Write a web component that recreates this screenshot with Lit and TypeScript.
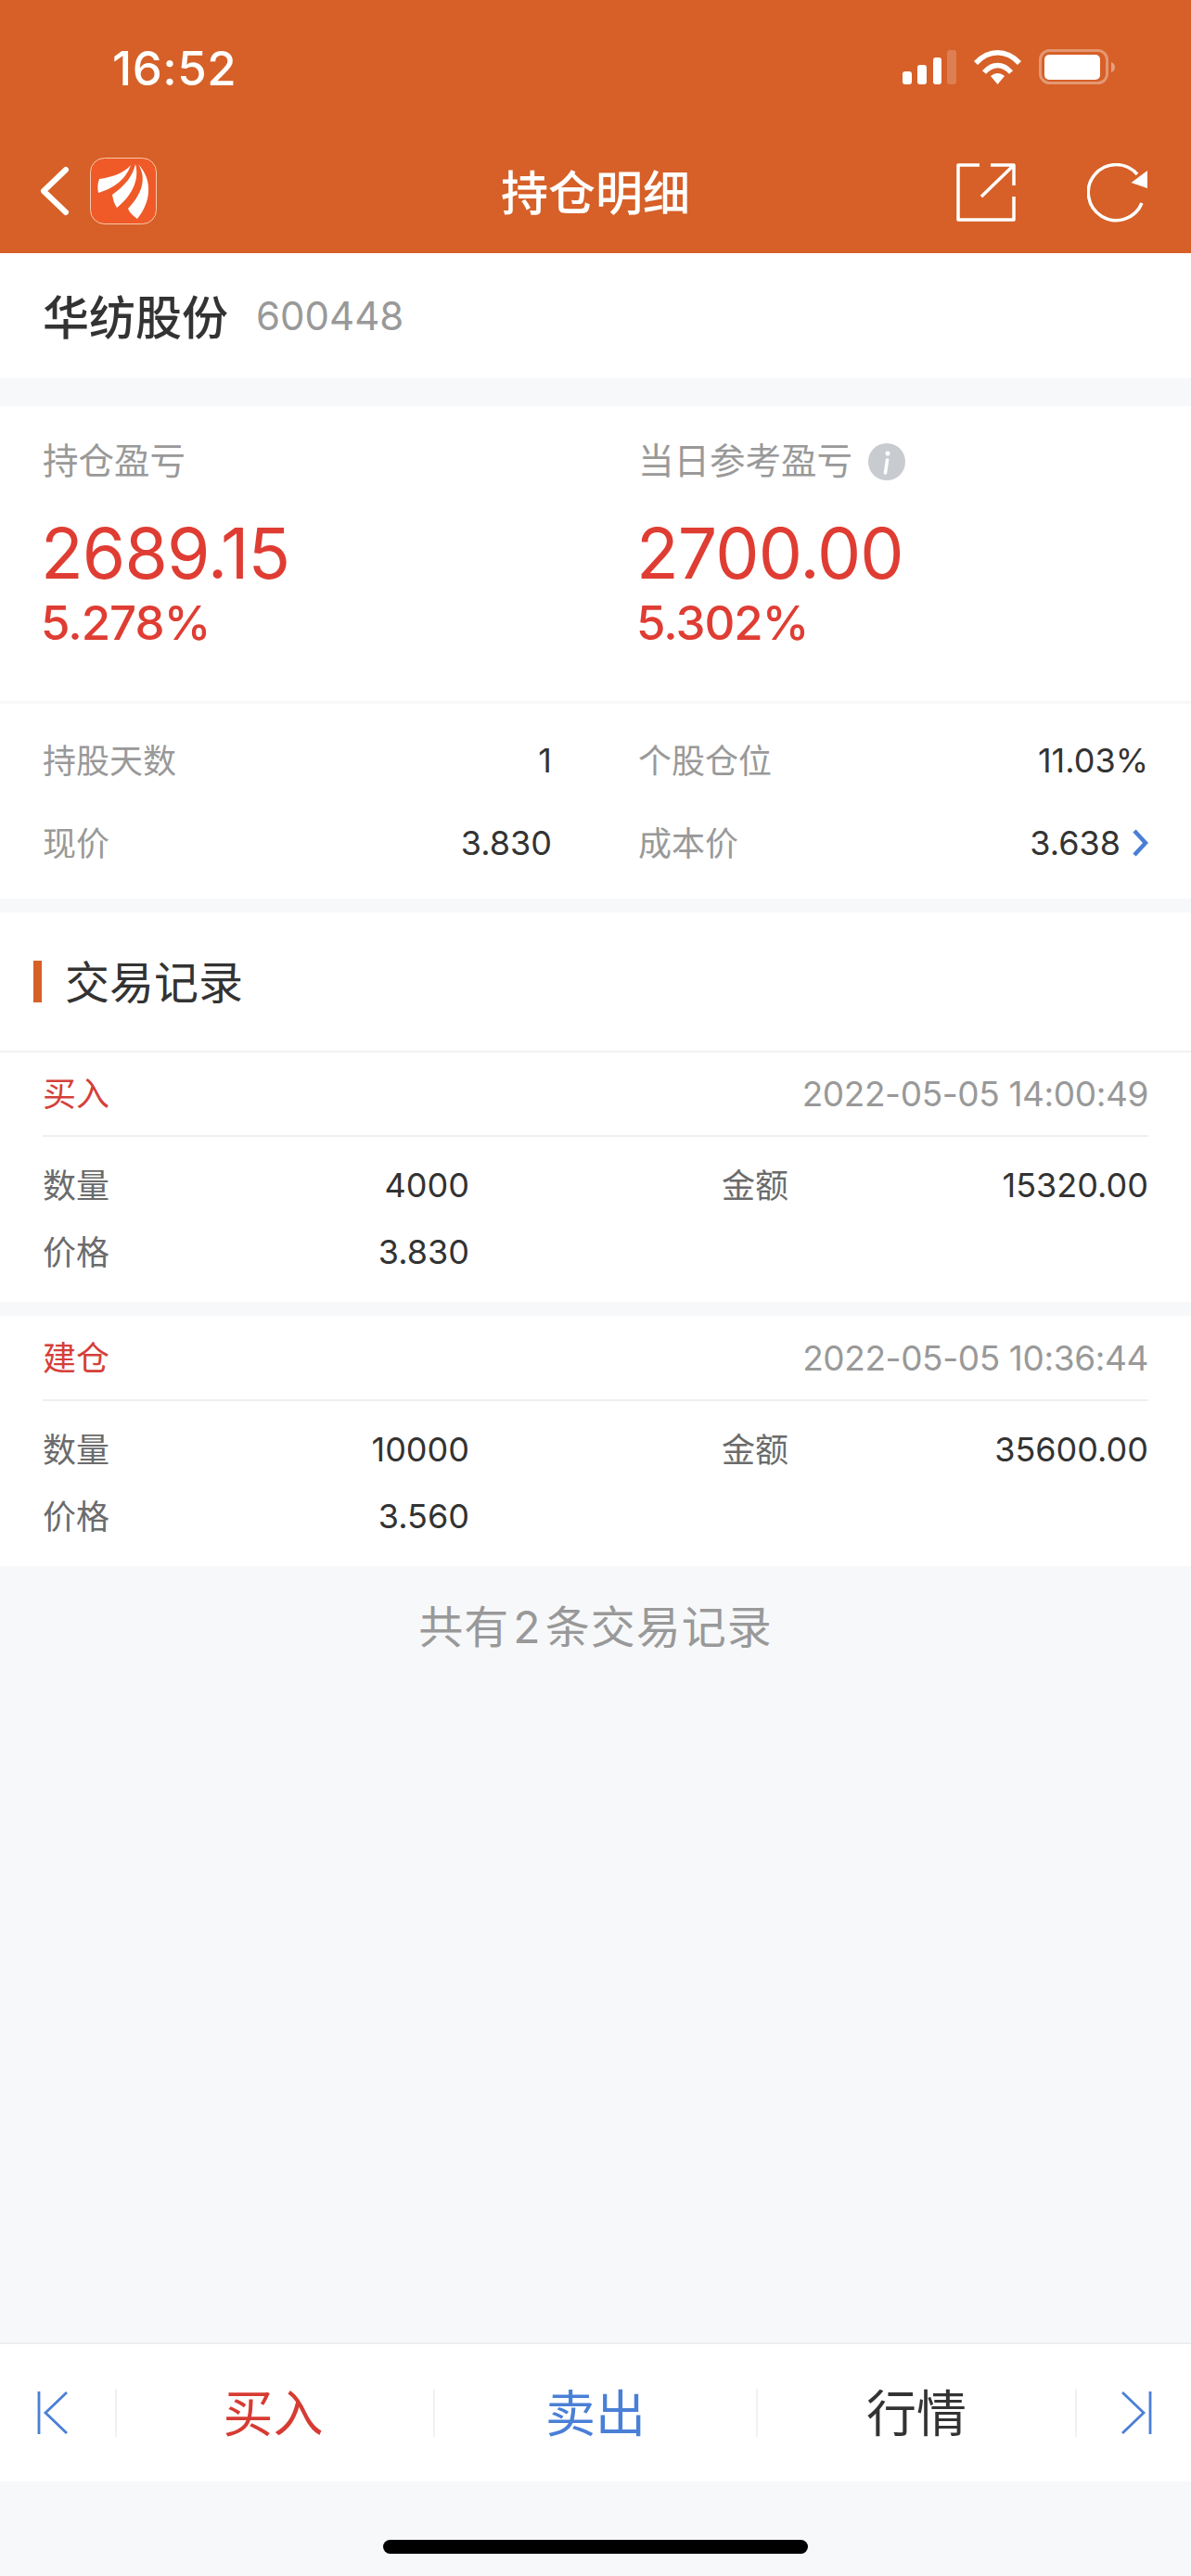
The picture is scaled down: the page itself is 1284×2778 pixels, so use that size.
import { LitElement, css, html, svg } from 'lit';
import { customElement } from 'lit/decorators.js';

const stats = [
  { label: '持股天数', value: '1' },
  { label: '个股仓位', value: '11.03%' },
  { label: '现价', value: '3.830' },
  { label: '成本价', value: '3.638', more: true },
];

const trades = [
  { kind: '买入', time: '2022-05-05 14:00:49', qty: '4000', amount: '15320.00', price: '3.830' },
  { kind: '建仓', time: '2022-05-05 10:36:44', qty: '10000', amount: '35600.00', price: '3.560' },
];

const logo = svg`<svg class="logo" viewBox="0 0 72 72" width="72" height="72">
  <rect x="0.5" y="0.5" width="71" height="71" rx="15" fill="#ef5a28" stroke="#f6c9a8"/>
  <path d="M44 8C36 17 24 21 10 23C8 28 8 33 9 38C22 34 38 26 44 8Z" fill="#fff"/>
  <path d="M49 7C46 20 38 30 24 40C25 45 26 50 29 54C44 42 54 25 49 7Z" fill="#fff"/>
  <path d="M52 7C60 20 59 36 41 55C43 60 47 63 51 66C66 48 68 24 52 7Z" fill="#fff"/>
</svg>`;

@customElement('app-root')
export class AppRoot extends LitElement {
  static styles = css`
    :host {
      display: flex;
      flex-direction: column;
      width: 1284px;
      height: 2778px;
      background: #f7f8fa;
      font-family: 'Liberation Sans', 'Noto Sans CJK SC', sans-serif;
      color: #333;
    }

    /* top bar */
    .head {
      height: 273px;
      background: #d66028;
      color: #fff;
      display: flex;
      flex-direction: column;
      flex: none;
    }
    .status {
      height: 135px;
      display: flex;
      align-items: center;
      justify-content: space-between;
      padding: 11px 0 0 121px;
      box-sizing: border-box;
    }
    .clock {
      font-family: Inter, sans-serif;
      font-size: 51px;
      font-weight: 500;
      letter-spacing: 0.5px;
    }
    .status svg {
      margin-right: 81px;
    }
    .nav {
      flex: 1;
      display: grid;
      grid-template-columns: 1fr auto 1fr;
      align-items: center;
      padding-top: 4px;
    }
    .nav-left {
      display: flex;
      align-items: center;
      gap: 22px;
      padding-left: 43px;
    }
    .logo {
      display: block;
    }
    .nav-title {
      font-size: 51px;
      font-weight: 500;
      padding-bottom: 3px;
    }
    .nav-right {
      display: flex;
      justify-content: flex-end;
      align-items: center;
      gap: 77px;
      padding-right: 46px;
      margin-top: 4px;
    }

    /* stock name */
    .stock {
      height: 135px;
      background: #fff;
      display: flex;
      align-items: center;
      gap: 30px;
      padding-left: 46px;
      flex: none;
    }
    .stock-name {
      font-size: 50px;
      font-weight: 500;
      padding-bottom: 3px;
    }
    .stock-code {
      font-family: Inter, sans-serif;
      font-size: 42px;
      color: #999;
    }

    /* summary */
    .card {
      margin-top: 30px;
      background: #fff;
      flex: none;
    }
    .gains {
      display: grid;
      grid-template-columns: 642px 642px;
      height: 321px;
      box-sizing: border-box;
      padding-top: 35px;
      border-bottom: 3px solid #f7f8fa;
    }
    .gain {
      padding-left: 46px;
    }
    .gain-label {
      display: flex;
      align-items: center;
      gap: 17px;
      font-size: 38.5px;
      line-height: 50px;
      color: #999;
    }
    .gain-value {
      margin: 32px 0 0 -2px;
      font-family: Inter, sans-serif;
      font-size: 75px;
      line-height: 84px;
      color: #df3d33;
      letter-spacing: -0.9px;
    }
    .gain-pct {
      margin: 3px 0 0 -2px;
      font-family: Inter, sans-serif;
      font-size: 51px;
      line-height: 60px;
      font-weight: 500;
      color: #df3d33;
      letter-spacing: -1px;
    }
    .stats {
      display: grid;
      grid-template-columns: 642px 642px;
      grid-auto-rows: 89px;
      height: 210px;
      box-sizing: border-box;
      padding-top: 16px;
    }
    .stat {
      display: flex;
      align-items: center;
      justify-content: space-between;
      padding: 0 46px;
      font-size: 36px;
    }
    .stat:nth-child(odd) {
      padding-right: 47px;
    }
    .stat-label {
      color: #999;
      padding-bottom: 4px;
    }
    .stat-value {
      font-family: Inter, sans-serif;
      font-size: 36px;
      color: #333;
      display: flex;
      align-items: center;
      gap: 12px;
    }

    /* trades */
    .section {
      margin-top: 15px;
      height: 151px;
      background: #fff;
      display: flex;
      align-items: center;
      gap: 25px;
      padding-left: 36px;
      border-bottom: 2px solid #f0f1f3;
      box-sizing: border-box;
      flex: none;
    }
    .section i {
      width: 9px;
      height: 45px;
      background: #d66028;
    }
    .section span {
      font-size: 48px;
      padding-bottom: 5px;
    }
    .trade {
      background: #fff;
      padding: 0 46px;
      height: 269px;
      box-sizing: border-box;
      flex: none;
    }
    .trade + .trade {
      margin-top: 15px;
      height: 270px;
    }
    .trade-head {
      height: 91px;
      display: flex;
      align-items: center;
      justify-content: space-between;
      border-bottom: 2px solid #eeeff1;
      box-sizing: border-box;
    }
    .trade + .trade .trade-head {
      height: 92px;
    }
    .kind {
      font-size: 36px;
      color: #d4403a;
      padding-bottom: 5px;
    }
    .time {
      font-family: Inter, sans-serif;
      font-size: 37px;
      color: #999;
      letter-spacing: -0.4px;
    }
    .trade-body {
      display: grid;
      grid-template-columns: 1fr 1fr;
      column-gap: 272px;
      grid-auto-rows: 72px;
      padding-top: 16px;
      font-size: 36px;
    }
    .cell {
      display: flex;
      justify-content: space-between;
      align-items: center;
      color: #6b6b6b;
    }
    .cell-label {
      padding-bottom: 5px;
    }
    .num {
      font-family: Inter, sans-serif;
      color: #333;
    }
    .total {
      text-align: center;
      font-size: 48px;
      line-height: 60px;
      color: #999;
      padding-top: 36px;
      letter-spacing: 1px;
    }
    .total b {
      font-family: Inter, sans-serif;
      font-weight: 400;
      margin: 0 4px;
    }
    .spacer {
      flex: 1;
    }

    /* toolbar */
    .bar {
      height: 150px;
      background: #fff;
      border-top: 2px solid #eceef0;
      box-sizing: border-box;
      display: grid;
      grid-template-columns: 126px 343px 348px 344px 1fr;
      align-items: center;
      flex: none;
    }
    .bar-item {
      height: 52px;
      display: flex;
      align-items: center;
      justify-content: center;
      font-size: 54px;
      border-right: 2px solid #f0f1f3;
    }
    .bar-item span {
      padding-bottom: 5px;
    }
    .bar-item:first-child {
      padding-right: 10px;
    }
    .bar-item:last-child {
      border-right: none;
      padding-left: 4px;
    }
    .buy {
      color: #d63c32;
      padding-right: 4px;
    }
    .sell { color: #4a7fd6; }
    .home {
      height: 102px;
      display: flex;
      align-items: flex-start;
      justify-content: center;
      padding-top: 63px;
      box-sizing: border-box;
      flex: none;
    }
    .home i {
      width: 458px;
      height: 15px;
      border-radius: 8px;
      background: #000;
    }
  `;

  private renderStatus() {
    return html`<div class="status">
      <span class="clock">16:52</span>
      <svg width="230" height="40" viewBox="0 0 230 40">
        <rect x="0" y="24" width="10" height="14" rx="3" fill="#fff"/>
        <rect x="16" y="17" width="10" height="21" rx="3" fill="#fff"/>
        <rect x="33" y="9" width="9" height="29" rx="3" fill="#fff"/>
        <rect x="48" y="1" width="10" height="37" rx="3" fill="#fff" opacity=".2"/>
        <path d="M79 15C93 0 112 0 126 15" fill="none" stroke="#fff" stroke-width="5.5"/>
        <path d="M88 25C97 15 108 15 117 25" fill="none" stroke="#fff" stroke-width="5.5"/>
        <path d="M102.5 38L95 29C100 25 105 25 110 29Z" fill="#fff"/>
        <rect x="148.5" y="1.5" width="72" height="35" rx="10" fill="none" stroke="#fff" stroke-opacity=".35" stroke-width="3"/>
        <rect x="153" y="6" width="60" height="27" rx="5" fill="#fff"/>
        <path d="M225 14C228 15 229 17 229 19.5C229 22 228 24 225 25Z" fill="#fff" opacity=".4"/>
      </svg>
    </div>`;
  }

  private renderNav() {
    return html`<div class="nav">
      <div class="nav-left">
        <svg width="32" height="54" viewBox="0 0 32 54">
          <path d="M28 4L4 27L28 50" fill="none" stroke="#fff" stroke-width="6" stroke-linecap="round" stroke-linejoin="round"/>
        </svg>
        ${logo}
      </div>
      <div class="nav-title">持仓明细</div>
      <div class="nav-right">
        <svg width="64" height="64" viewBox="0 0 64 64">
          <path d="M25 2H2V61H62V36M62 24V2H37M62 2L27 36" fill="none" stroke="#fff" stroke-width="3.5" stroke-linejoin="round"/>
        </svg>
        <svg width="66" height="64" viewBox="0 0 66 64">
          <path d="M59 43A30 30 0 1 1 54 12" fill="none" stroke="#fff" stroke-width="3.5"/>
          <path d="M65 8V27L47.5 21Z" fill="#fff"/>
        </svg>
      </div>
    </div>`;
  }

  private renderGain(label: string, value: string, pct: string, info = false) {
    return html`<div class="gain">
      <div class="gain-label">
        ${label}
        ${info
          ? html`<svg width="40" height="40" viewBox="0 0 40 40">
              <circle cx="20" cy="20" r="20" fill="#c8cbd0"/>
              <circle cx="21" cy="11" r="2.5" fill="#fff"/>
              <path d="M20.5 18L18.5 32" stroke="#fff" stroke-width="3.6" stroke-linecap="round"/>
            </svg>`
          : ''}
      </div>
      <div class="gain-value">${value}</div>
      <div class="gain-pct">${pct}</div>
    </div>`;
  }

  private renderTrade(t: (typeof trades)[number]) {
    return html`<div class="trade">
      <div class="trade-head">
        <span class="kind">${t.kind}</span>
        <span class="time">${t.time}</span>
      </div>
      <div class="trade-body">
        <div class="cell"><span class="cell-label">数量</span><span class="num">${t.qty}</span></div>
        <div class="cell"><span class="cell-label">金额</span><span class="num">${t.amount}</span></div>
        <div class="cell"><span class="cell-label">价格</span><span class="num">${t.price}</span></div>
      </div>
    </div>`;
  }

  render() {
    return html`
      <div class="head">${this.renderStatus()} ${this.renderNav()}</div>
      <div class="stock">
        <span class="stock-name">华纺股份</span>
        <span class="stock-code">600448</span>
      </div>
      <div class="card">
        <div class="gains">
          ${this.renderGain('持仓盈亏', '2689.15', '5.278%')}
          ${this.renderGain('当日参考盈亏', '2700.00', '5.302%', true)}
        </div>
        <div class="stats">
          ${stats.map(
            s => html`<div class="stat">
              <span class="stat-label">${s.label}</span>
              <span class="stat-value">
                ${s.value}
                ${s.more
                  ? html`<svg width="18" height="30" viewBox="0 0 18 30">
                      <path d="M3 2L15 15L3 28" fill="none" stroke="#4a7fd6" stroke-width="4.5"/>
                    </svg>`
                  : ''}
              </span>
            </div>`
          )}
        </div>
      </div>
      <div class="section"><i></i><span>交易记录</span></div>
      ${trades.map(t => this.renderTrade(t))}
      <div class="total">共有<b>2</b>条交易记录</div>
      <div class="spacer"></div>
      <div class="bar">
        <div class="bar-item">
          <svg width="34" height="46" viewBox="0 0 34 46">
            <path d="M2 0V46M32 1L9 23L32 45" fill="none" stroke="#4a7fd6" stroke-width="2.8"/>
          </svg>
        </div>
        <div class="bar-item buy"><span>买入</span></div>
        <div class="bar-item sell"><span>卖出</span></div>
        <div class="bar-item"><span>行情</span></div>
        <div class="bar-item">
          <svg width="34" height="46" viewBox="0 0 34 46">
            <path d="M32 0V46M2 1L25 23L2 45" fill="none" stroke="#4a7fd6" stroke-width="2.8"/>
          </svg>
        </div>
      </div>
      <div class="home"><i></i></div>
    `;
  }
}
